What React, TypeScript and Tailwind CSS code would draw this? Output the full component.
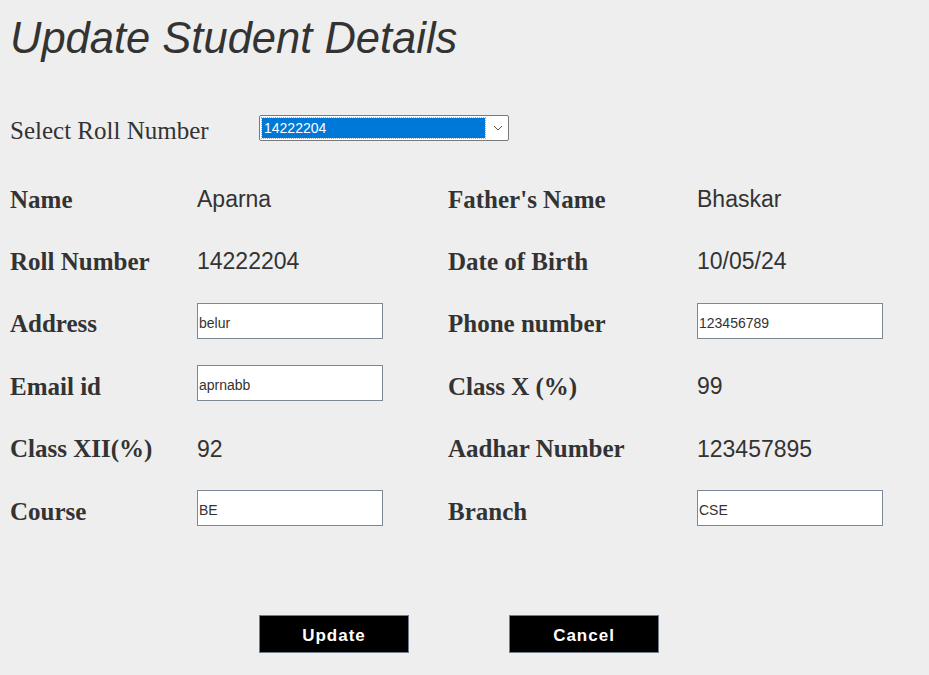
import { useState } from 'react';

type Field = {
  label: string;
  value: string;
  editable?: boolean;
};

const rows: [Field, Field][] = [
  [{ label: 'Name', value: 'Aparna' }, { label: "Father's Name", value: 'Bhaskar' }],
  [{ label: 'Roll Number', value: '14222204' }, { label: 'Date of Birth', value: '10/05/24' }],
  [{ label: 'Address', value: 'belur', editable: true }, { label: 'Phone number', value: '123456789', editable: true }],
  [{ label: 'Email id', value: 'aprnabb', editable: true }, { label: 'Class X (%)', value: '99' }],
  [{ label: 'Class XII(%)', value: '92' }, { label: 'Aadhar Number', value: '123457895' }],
  [{ label: 'Course', value: 'BE', editable: true }, { label: 'Branch', value: 'CSE', editable: true }],
];

const serif = "font-['Liberation_Serif','Times_New_Roman',serif]";
const sans = "font-['Liberation_Sans',Arial,sans-serif]";

const FieldValue = ({ field }: { field: Field }) => {
  const [text, setText] = useState(field.value);

  if (field.editable) {
    return (
      <input
        value={text}
        onChange={(e) => setText(e.target.value)}
        className={`${sans} mb-[6px] h-[36px] w-[186px] border border-[#7b8896] bg-white px-[1px] pt-[4px] text-[14px] text-[#333] outline-none`}
      />
    );
  }

  return <span className={`${sans} text-[23px] text-[#333]`}>{field.value}</span>;
};

export default function App() {
  return (
    <div className="min-h-[675px] w-full bg-[#eeeeee] pl-[10px] pt-[14px] text-[#333]">
      <h1 className={`${sans} h-[48px] text-[43.5px] leading-[48px] italic`}>Update Student Details</h1>

      {/* roll number picker */}
      <div className="mt-[53px] flex h-[26px] items-center">
        <span className={`${serif} mt-[4px] w-[249px] text-[25px] leading-none`}>Select Roll Number</span>
        <div className="flex h-[26px] w-[250px] items-center rounded-[2px] border border-[#7a7a7a] bg-white pl-[2px]">
          <span
            className={`${sans} flex h-[20px] w-[223px] items-center bg-[#0078d7] px-[2px] text-[14px] text-white outline-1 outline-dotted outline-[#f7a83a]`}
          >
            14222204
          </span>
          <svg className="ml-[8px]" width="10" height="6" viewBox="0 0 10 6" fill="none">
            <path d="M1 1l4 4 4-4" stroke="#555" strokeWidth="1" />
          </svg>
        </div>
      </div>

      <div className="mt-[27px] grid grid-cols-[187px_251px_249px_1fr] auto-rows-[62.4px] items-center">
        {rows.map(([left, right]) => (
          <div key={left.label} className="contents">
            <span className={`${serif} text-[25px] leading-none font-bold`}>{left.label}</span>
            <div className="flex items-center">
              <FieldValue field={left} />
            </div>
            <span className={`${serif} text-[25px] leading-none font-bold`}>{right.label}</span>
            <div className="flex items-center">
              <FieldValue field={right} />
            </div>
          </div>
        ))}
      </div>

      <div className="ml-[249px] mt-[73px] flex gap-[100px] pb-[22px]">
        <button className={`${sans} h-[38px] w-[150px] border border-[#6f7d8c] bg-black pt-[3px] text-[17px] font-bold tracking-[1px] text-white`}>
          Update
        </button>
        <button className={`${sans} h-[38px] w-[150px] border border-[#6f7d8c] bg-black pt-[3px] text-[17px] font-bold tracking-[1px] text-white`}>
          Cancel
        </button>
      </div>
    </div>
  );
}
